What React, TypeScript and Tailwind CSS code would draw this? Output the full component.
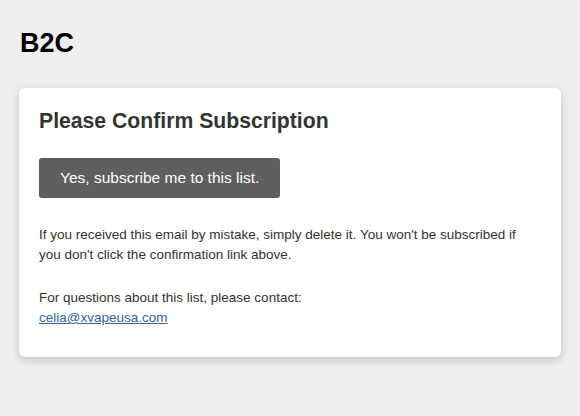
export default function App() {
  return (
    <div className="min-h-screen bg-[#eeeeee] px-[19px] pt-[27px] pb-10 font-['Liberation_Sans',Arial,sans-serif]">
      {/* Header */}
      <h1 className="ml-px text-[27px] leading-[32px] font-bold text-black">B2C</h1>

      {/* Card */}
      <div className="mt-[29px] bg-white rounded-md shadow-[0_3px_10px_rgba(0,0,0,0.18)] px-5 pt-[19px] pb-[29px]">
        <h2 className="text-[21.2px] leading-[28px] font-bold text-[#333333]">Please Confirm Subscription</h2>

        <a
          href="#"
          className="mt-[23px] inline-block bg-[#5f5f5f] text-white text-[15.5px] leading-[40px] px-[21px] rounded-[3px]"
        >
          Yes, subscribe me to this list.
        </a>

        <p className="mt-[27px] text-[13.5px] leading-[20px] text-[#333333]">
          If you received this email by mistake, simply delete it. You won't be subscribed if you don't click the
          confirmation link above.
        </p>

        <p className="mt-[23px] text-[13.5px] leading-[20px] text-[#333333]">
          For questions about this list, please contact:
          <br />
          <a href="#" className="text-[#336699] underline">
            celia@xvapeusa.com
          </a>
        </p>
      </div>
    </div>
  )
}
